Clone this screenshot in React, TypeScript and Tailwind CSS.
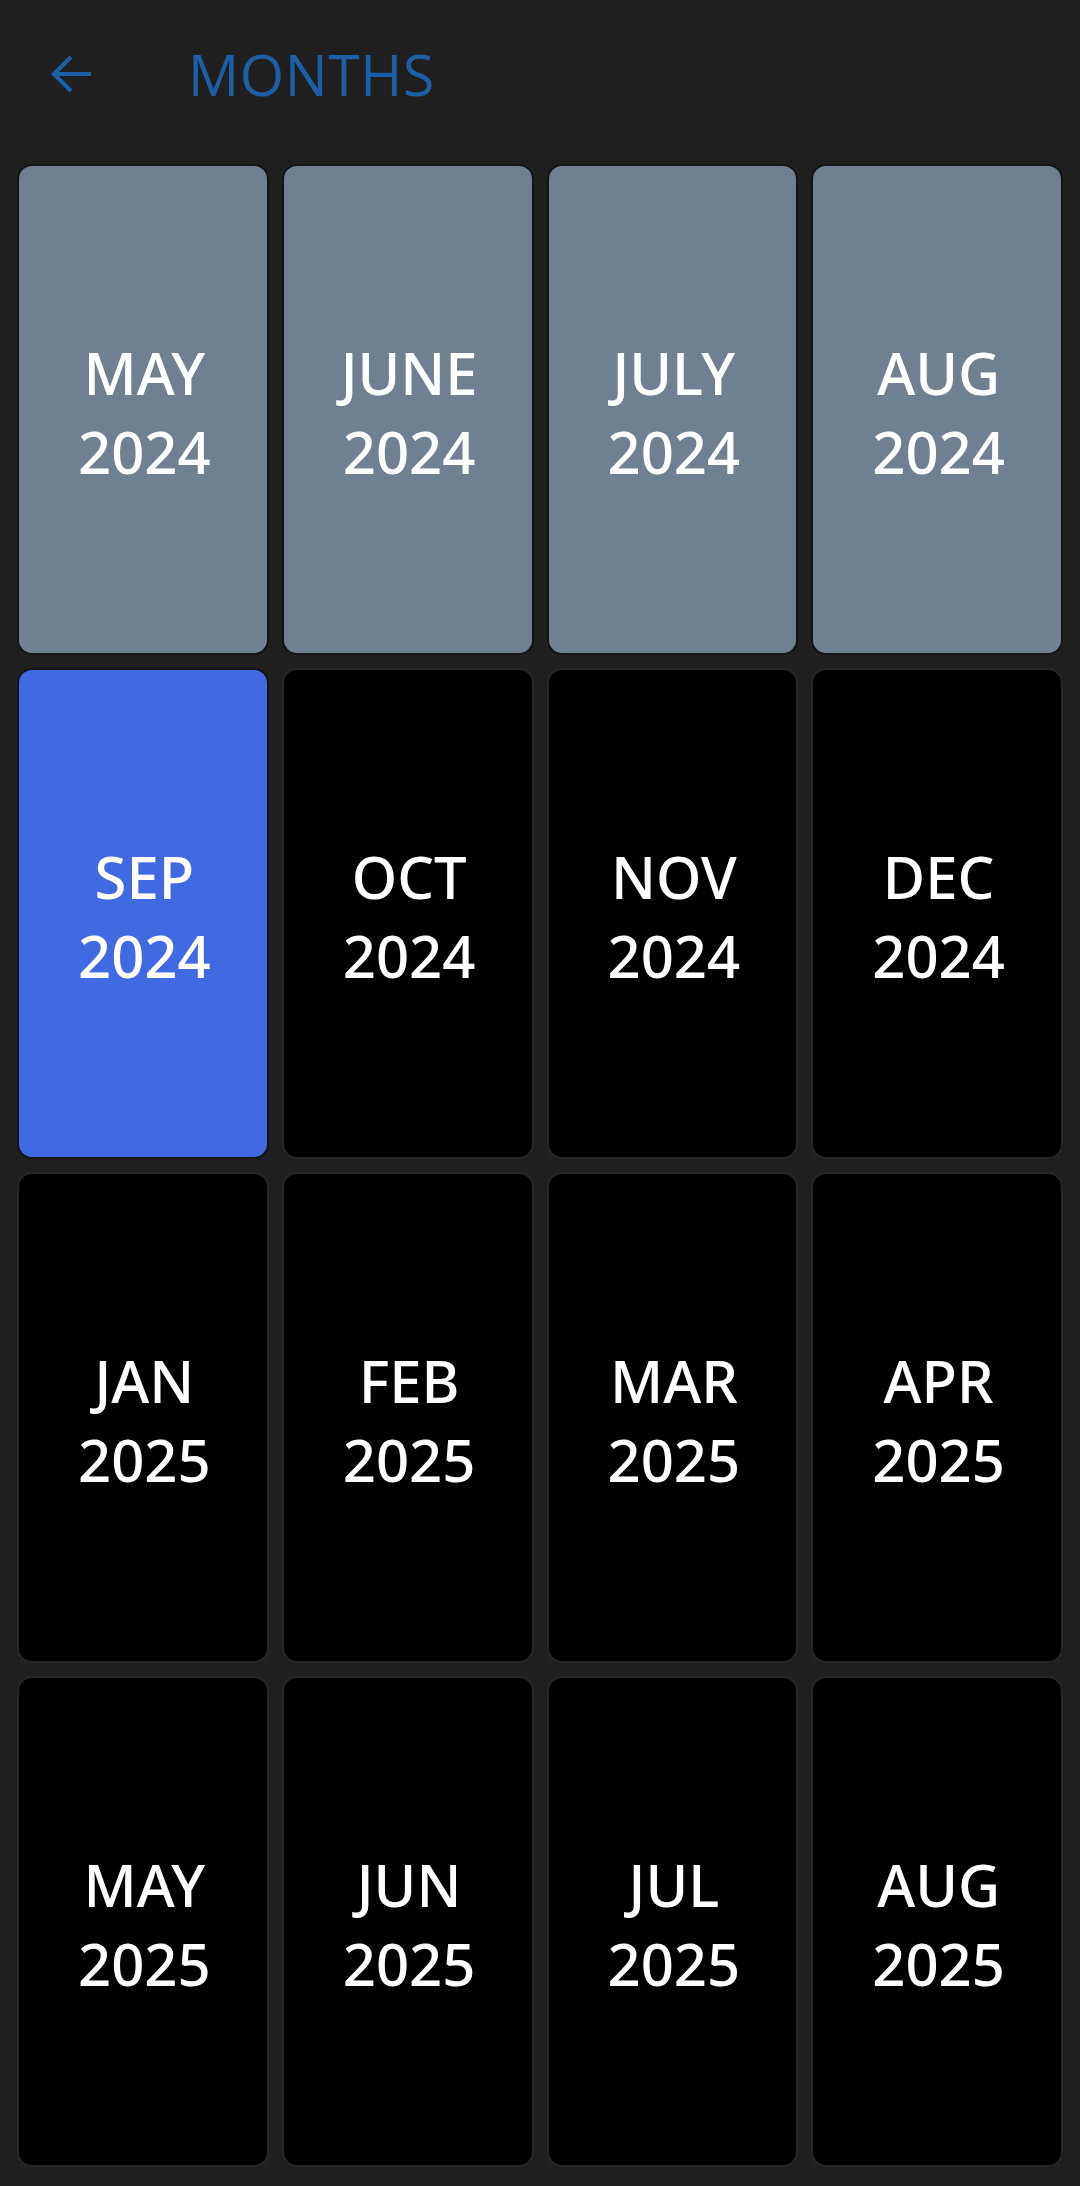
import React from "react";

type Cell = { m: string; y: string; kind: "past" | "current" | "future" };

const cells: Cell[] = [
  { m: "MAY", y: "2024", kind: "past" },
  { m: "JUNE", y: "2024", kind: "past" },
  { m: "JULY", y: "2024", kind: "past" },
  { m: "AUG", y: "2024", kind: "past" },
  { m: "SEP", y: "2024", kind: "current" },
  { m: "OCT", y: "2024", kind: "future" },
  { m: "NOV", y: "2024", kind: "future" },
  { m: "DEC", y: "2024", kind: "future" },
  { m: "JAN", y: "2025", kind: "future" },
  { m: "FEB", y: "2025", kind: "future" },
  { m: "MAR", y: "2025", kind: "future" },
  { m: "APR", y: "2025", kind: "future" },
  { m: "MAY", y: "2025", kind: "future" },
  { m: "JUN", y: "2025", kind: "future" },
  { m: "JUL", y: "2025", kind: "future" },
  { m: "AUG", y: "2025", kind: "future" },
];

function cardClass(kind: Cell["kind"]) {
  if (kind === "past") return "bg-[#708090] border-2 border-[#141414]";
  if (kind === "current") return "bg-[#4169e1] border-2 border-[#141414]";
  return "bg-black border-2 border-[#272727]";
}

export default function App() {
  return (
    <div
      className="w-[1080px] h-[2186px] bg-[#1f1f1f] flex flex-col"
      style={{ fontFamily: '"Open Sans", "Noto Sans", sans-serif' }}
    >
      <div className="h-[148px] flex items-center shrink-0">
        <div className="w-[188px] flex items-center pl-[50px]">
          <svg width="42" height="42" viewBox="0 0 42 42" fill="none">
            <path
              d="M41 21H4M21 4L4 21L21 38"
              stroke="#1d5fa6"
              strokeWidth="4.2"
              strokeLinecap="butt"
              strokeLinejoin="miter"
            />
          </svg>
        </div>
        <div className="text-[57px] leading-none text-[#1d5fa6] tracking-[0.6px]">
          MONTHS
        </div>
      </div>
      <div className="px-[17px] pt-[16px] pb-[18px] grid grid-cols-4 gap-[13px] grid-rows-[repeat(4,491px)]">
        {cells.map((c, i) => (
          <div
            key={i}
            className={`${cardClass(c.kind)} rounded-[15px] flex flex-col items-center justify-center pt-[4px] pl-[3px] text-white text-[58px] leading-[79px]`}
            style={{ fontFamily: '"Noto Sans", "Open Sans", sans-serif', fontWeight: 500 }}
          >
            <div>{c.m}</div>
            <div>{c.y}</div>
          </div>
        ))}
      </div>
    </div>
  );
}
